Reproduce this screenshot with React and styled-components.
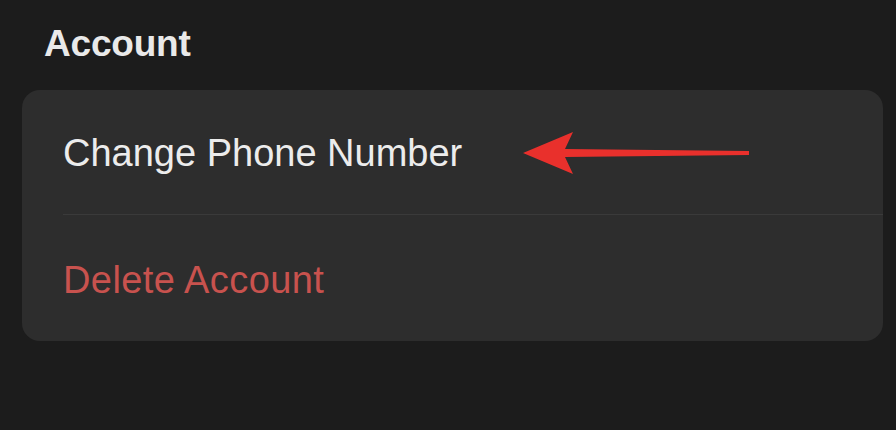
import React from "react";
import styled, { createGlobalStyle } from "styled-components";

const GlobalStyle = createGlobalStyle`
  html, body {
    margin: 0;
    padding: 0;
    background: #1c1c1c;
  }
  body {
    font-family: "Liberation Sans", Arial, sans-serif;
  }
`;

const Screen = styled.div`
  width: 896px;
  height: 430px;
  box-sizing: border-box;
  padding: 22px 13px 0 22px;
  background: #1c1c1c;
  overflow: hidden;
`;

const SectionTitle = styled.h2`
  margin: 0 0 24px 22px;
  font-size: 37px;
  line-height: 44px;
  font-weight: 700;
  color: #e9e9e9;
  letter-spacing: -0.2px;
`;

const Card = styled.div`
  background: #2d2d2d;
  border-radius: 18px;
  overflow: hidden;
`;

const Row = styled.div`
  padding-left: 41px;
`;

const RowInner = styled.div`
  display: flex;
  align-items: center;
  gap: 61px;
  height: ${(p) => p.$height}px;
  padding-top: ${(p) => p.$offset || 0}px;
  box-sizing: border-box;
  border-bottom: ${(p) => (p.$divider ? "1px solid #3a3a3a" : "none")};
`;

const Label = styled.span`
  font-size: 38px;
  line-height: 44px;
  letter-spacing: ${(p) => (p.$danger ? "0.4px" : "0")};
  color: ${(p) => (p.$danger ? "#c8524e" : "#ececec")};
`;

const Arrow = () => (
  <svg width="230" height="50" viewBox="0 0 230 50">
    <polygon
      points="0,25 50,4 42,21 226,23 226,27 42,29 50,46"
      fill="#e9302c"
    />
  </svg>
);

export default function App() {
  return (
    <>
      <GlobalStyle />
      <Screen>
        <SectionTitle>Account</SectionTitle>
        <Card>
          <Row>
            <RowInner $height={125} $offset={2} $divider>
              <Label>Change Phone Number</Label>
              <Arrow />
            </RowInner>
          </Row>
          <Row>
            <RowInner $height={126} $offset={4}>
              <Label $danger>Delete Account</Label>
            </RowInner>
          </Row>
        </Card>
      </Screen>
    </>
  );
}
